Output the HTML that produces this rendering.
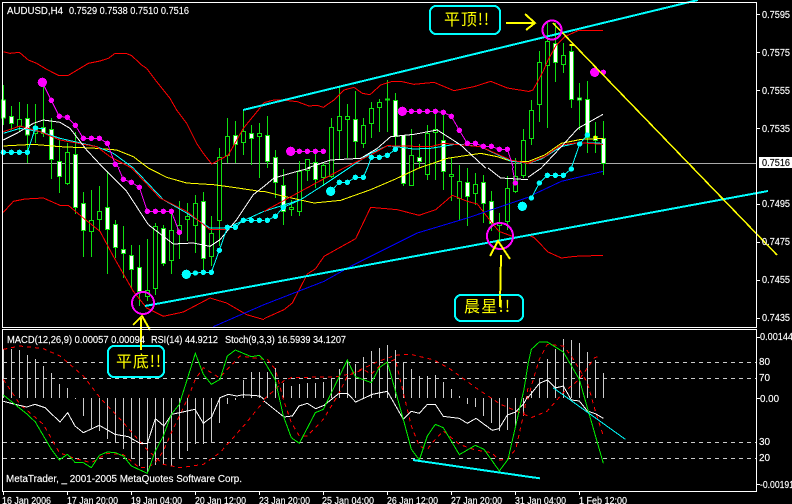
<!DOCTYPE html>
<html><head><meta charset="utf-8"><style>
html,body{margin:0;padding:0;background:#000;width:792px;height:504px;overflow:hidden}
svg{display:block;shape-rendering:crispEdges}
text{font-family:"Liberation Sans","WenQuanYi Zen Hei",sans-serif;font-size:10px;fill:#fff;stroke:#fff;stroke-width:.15;shape-rendering:auto}
.cn{font-family:"WenQuanYi Zen Hei","Noto Sans CJK SC",sans-serif;font-size:16px;fill:#ff0;stroke:none}
.p path{fill:none;stroke-width:3}
.p circle{stroke:none}
.r{stroke:#f00}.y{stroke:#ff0}.c{stroke:#0ff}.w{stroke:#fff}.b{stroke:#00f}.m{stroke:#f0f}.g{stroke:#0e0}
.d{stroke-dasharray:12 12}
.t{stroke-width:6!important}
</style></head><body>
<svg width="792" height="504" viewBox="0 0 792 504" xmlns="http://www.w3.org/2000/svg">
<rect width="792" height="504" fill="#000"/>
<!-- current price line -->
<path d="M3 163.5H756" stroke="#aaa" fill="none"/>
<!-- wicks -->
<path stroke="#10e010" fill="none" d="M3.5 85V125M11.5 106V130M19.5 102V132M27.5 104V163M35.5 104V143M43.5 85V137M51.5 118V179M59.5 140V193M67.5 143V185M75.5 132V214M83.5 192V257M91.5 190V257M99.5 186V231M107.5 171V274M115.5 220V258M123.5 226V278M131.5 245V288M139.5 245V306M147.5 239V301M155.5 223V295M163.5 225V266M171.5 211V274M179.5 201V259M187.5 203V241M195.5 195V253M203.5 192V270M211.5 216V266M219.5 148V246M227.5 118V163M235.5 121V163M243.5 110V155M251.5 125V165M259.5 123V178M267.5 116V168M275.5 150V198M283.5 169V225M291.5 200V216M299.5 161V216M307.5 159V181M315.5 153V188M323.5 163V186M331.5 118V178M339.5 86V160M347.5 104V158M355.5 91V158M363.5 118V148M371.5 102V138M379.5 99V132M387.5 80V132M395.5 93V147M403.5 135V186M411.5 129V186M419.5 144V168M427.5 125V180M435.5 113V180M443.5 113V190M451.5 158V201M459.5 165V220M467.5 168V226M475.5 173V205M483.5 175V223M491.5 191V231M499.5 213V241M507.5 176V230M515.5 158V193M523.5 129V178M531.5 100V145M539.5 51V122M547.5 21V128M555.5 23V82M563.5 43V73M571.5 44V108M579.5 83V130M587.5 81V153M595.5 122V153M603.5 121V175"/>
<!-- bearish bodies (white) -->
<g fill="#fff" stroke="#10e010">
<rect x="1.5" y="100" width="4" height="18"/><rect x="9.5" y="116.5" width="4" height="7"/><rect x="25.5" y="118.5" width="4" height="16.5"/><rect x="41.5" y="127.5" width="4" height="6"/><rect x="49.5" y="129.5" width="4" height="30"/><rect x="57.5" y="161.5" width="4" height="15"/><rect x="73.5" y="154.5" width="4" height="53"/><rect x="81.5" y="203.5" width="4" height="27"/><rect x="105.5" y="207.5" width="4" height="22"/><rect x="113.5" y="224.5" width="4" height="23"/><rect x="121.5" y="249.5" width="4" height="4"/><rect x="129.5" y="255.5" width="4" height="14"/><rect x="137.5" y="267.5" width="4" height="24"/><rect x="161.5" y="228.5" width="4" height="35"/><rect x="201.5" y="201.5" width="4" height="57"/><rect x="233.5" y="135.5" width="4" height="9"/><rect x="249.5" y="133.5" width="4" height="5"/><rect x="265.5" y="135.5" width="4" height="26"/><rect x="273.5" y="157.5" width="4" height="25"/><rect x="281.5" y="185.5" width="4" height="26"/><rect x="313.5" y="162.5" width="4" height="17"/><rect x="353.5" y="119.5" width="4" height="22"/><rect x="393.5" y="100.5" width="4" height="36"/><rect x="401.5" y="135.5" width="4" height="48"/><rect x="417.5" y="157.5" width="4" height="4"/><rect x="441.5" y="140.5" width="4" height="31"/><rect x="465.5" y="182.5" width="4" height="14"/><rect x="481.5" y="182.5" width="4" height="21"/><rect x="489.5" y="201.5" width="4" height="22"/><rect x="553.5" y="43.5" width="4" height="19"/><rect x="569.5" y="51.5" width="4" height="48"/><rect x="577.5" y="98" width="4" height="2"/><rect x="585.5" y="99.5" width="4" height="38"/><rect x="593.5" y="136.5" width="4" height="4"/><rect x="601.5" y="138.5" width="4" height="25"/>
</g>
<!-- bullish bodies (hollow) -->
<g fill="#000" stroke="#10e010">
<rect x="17.5" y="119.5" width="4" height="7"/><rect x="33.5" y="126.5" width="4" height="7"/><rect x="65.5" y="152.5" width="4" height="31"/><rect x="89.5" y="220.5" width="4" height="11"/><rect x="97.5" y="211.5" width="4" height="8"/><rect x="145.5" y="290.5" width="4" height="6"/><rect x="153.5" y="226.5" width="4" height="62"/><rect x="169.5" y="230.5" width="4" height="30"/><rect x="177.5" y="225.5" width="4" height="8"/><rect x="185.5" y="216.5" width="4" height="3"/><rect x="193.5" y="203.5" width="4" height="22"/><rect x="209.5" y="233.5" width="4" height="23"/><rect x="217.5" y="157.5" width="4" height="63"/><rect x="225.5" y="136.5" width="4" height="19"/><rect x="241.5" y="131.5" width="4" height="11"/><rect x="257.5" y="133.5" width="4" height="3"/><rect x="289.5" y="207.5" width="4" height="2"/><rect x="297.5" y="171.5" width="4" height="40"/><rect x="305.5" y="159.5" width="4" height="11"/><rect x="321.5" y="165.5" width="4" height="12"/><rect x="329.5" y="127.5" width="4" height="49"/><rect x="337.5" y="116.5" width="4" height="14"/><rect x="345.5" y="116.5" width="4" height="3"/><rect x="361.5" y="125.5" width="4" height="18"/><rect x="369.5" y="108.5" width="4" height="15"/><rect x="377.5" y="102.5" width="4" height="5"/><rect x="385.5" y="99" width="4" height="1"/><rect x="409.5" y="155.5" width="4" height="30"/><rect x="425.5" y="133.5" width="4" height="41"/><rect x="433.5" y="129.5" width="4" height="3"/><rect x="449.5" y="174.5" width="4" height="2"/><rect x="457.5" y="181.5" width="4" height="17"/><rect x="473.5" y="184.5" width="4" height="9"/><rect x="497.5" y="222.5" width="4" height="3"/><rect x="505.5" y="188.5" width="4" height="33"/><rect x="513.5" y="176.5" width="4" height="15"/><rect x="521.5" y="140.5" width="4" height="35"/><rect x="529.5" y="110.5" width="4" height="28"/><rect x="537.5" y="62.5" width="4" height="42"/><rect x="545.5" y="41.5" width="4" height="24"/><rect x="561.5" y="55.5" width="4" height="9"/>
</g>

<!-- Panel A -->
<g class="p" transform="translate(0 0) scale(.33333)">
<path class="r" d="M10 155L30 160 58 157 85 180 110 190 140 208 175 226 205 226 240 205 265 190 300 183 325 175 345 160 378 160 395 167 425 195 440 205 470 245 510 295 530 330 560 370 590 430 610 460 635 492 685 465 730 385 775 330 792 308"/>
<path class="y" d="M10 438L100 433 180 440 290 445 350 450 400 470 445 504"/>
<path class="c" d="M10 400L60 385 120 395 180 415 290 440 340 460 400 504"/>
<path class="r" d="M10 395L60 378 120 395 180 420 290 440 330 470 395 504"/>
<path class="w" d="M10 420L50 400 100 370 130 360 180 367 210 385 260 450 310 504"/>
<path class="m" d="M127 247L154 301 178 349 202 352 226 376 250 415 298 415 322 430 346 493 358 504"/>
<path class="c" d="M10 457H82L106 384 130 386"/>
<g fill="#f0f"><circle cx="127" cy="247" r="14"/><circle cx="154" cy="301" r="8"/><circle cx="178" cy="349" r="8"/><circle cx="202" cy="352" r="8"/><circle cx="226" cy="376" r="8"/><circle cx="250" cy="415" r="8"/><circle cx="274" cy="415" r="8"/><circle cx="298" cy="415" r="8"/><circle cx="322" cy="430" r="8"/><circle cx="346" cy="493" r="8"/></g>
<g fill="#0ff"><circle cx="10" cy="457" r="8"/><circle cx="34" cy="457" r="8"/><circle cx="58" cy="457" r="8"/><circle cx="82" cy="457" r="8"/><circle cx="106" cy="384" r="8"/></g>
</g>

<!-- Panel B -->
<g class="p" transform="translate(264 0) scale(.33333)">
<path class="r" d="M0 308L30 300 55 300 100 305 135 318 160 316 178 322 210 300 240 270 270 262 295 280 318 284 350 255 385 244 410 244 450 253 510 247 570 272 630 260 680 244 730 264 792 274"/>
<path class="y" d="M465 504L550 475 650 460 700 470 745 485 792 485"/>
<path class="c" d="M255 504L320 460 370 437 450 447 500 445 580 432 650 440 740 483 792 490"/>
<path class="r" d="M240 504L320 465 370 437 500 440 540 430 650 440 740 480 792 490"/>
<path class="w" d="M130 504L200 480 290 475 340 445 380 410 450 403 520 390 590 435 665 504"/>
<path class="m" d="M80 454H178M415 334H514L538 337 562 349 586 391 610 430H634L658 439H682L706 448H730L744 490 748 504"/>
<path class="c" d="M310 504L322 472H346L370 466 394 448"/>
<g fill="#f0f"><circle cx="80" cy="454" r="14"/><circle cx="106" cy="454" r="8"/><circle cx="130" cy="454" r="8"/><circle cx="154" cy="454" r="8"/><circle cx="178" cy="454" r="8"/><circle cx="415" cy="334" r="14"/><circle cx="442" cy="334" r="8"/><circle cx="466" cy="334" r="8"/><circle cx="490" cy="334" r="8"/><circle cx="514" cy="334" r="8"/><circle cx="538" cy="337" r="8"/><circle cx="562" cy="349" r="8"/><circle cx="586" cy="391" r="8"/><circle cx="610" cy="430" r="8"/><circle cx="634" cy="430" r="8"/><circle cx="658" cy="439" r="8"/><circle cx="682" cy="439" r="8"/><circle cx="706" cy="448" r="8"/><circle cx="730" cy="448" r="8"/></g>
<g fill="#0ff"><circle cx="322" cy="472" r="8"/><circle cx="346" cy="472" r="8"/><circle cx="370" cy="466" r="8"/><circle cx="394" cy="448" r="8"/></g>
</g>

<!-- Panel C -->
<g class="p" transform="translate(528 0) scale(.33333)">
<path class="r" d="M0 275L15 270 45 215 60 180 85 135 110 110 150 92 225 91"/>
<path class="y" d="M0 485L50 465 100 430 160 418 226 415"/>
<path class="c" d="M0 490L40 477 100 440 150 428 225 430"/>
<path class="r" d="M0 490L50 470 100 435 150 428 225 433"/>
<path class="w" d="M40 504L100 440 150 385 225 343"/>
<path class="c" d="M130 504L155 432 178 405"/>
<g fill="#f0f"><circle cx="200" cy="217" r="14"/><circle cx="226" cy="217" r="8"/></g>
<g fill="#0ff"><circle cx="155" cy="432" r="8"/><circle cx="178" cy="405" r="8"/></g>
<g fill="#ff0"><circle cx="202" cy="412" r="5"/><rect x="124" y="132" width="14" height="6"/></g>
</g>

<!-- Panel D -->
<g class="p" transform="translate(0 168) scale(.33333)">
<path class="r" d="M10 133L40 100 75 93 130 90 180 112 205 112 250 150 300 190 340 265 400 370 440 420 490 445 550 432 630 390 680 405 740 440 792 455"/>
<path class="y" d="M445 0L500 28 560 45 640 50 700 58 780 70 792 70"/>
<path class="c" d="M400 0L490 95 560 135 630 180 680 180 730 158 792 130"/>
<path class="r" d="M395 0L480 90 560 130 630 185 680 185"/>
<path class="w" d="M310 0L380 70 445 170 520 228 580 225 630 235 660 215 710 155 760 80 792 55"/>
<path class="b" d="M640 476L792 410"/>
<path class="m" d="M355 0L370 34 394 43 418 58 442 130H514L538 193"/>
<path class="c" d="M558 319L586 315 610 313H634L658 247 682 178H706L730 157H792"/>
<g fill="#f0f"><circle cx="370" cy="34" r="8"/><circle cx="394" cy="43" r="8"/><circle cx="418" cy="58" r="8"/><circle cx="442" cy="130" r="8"/><circle cx="466" cy="130" r="8"/><circle cx="490" cy="130" r="8"/><circle cx="514" cy="130" r="8"/><circle cx="538" cy="193" r="8"/></g>
<g fill="#0ff"><circle cx="559" cy="319" r="14"/><circle cx="586" cy="315" r="8"/><circle cx="610" cy="313" r="8"/><circle cx="634" cy="313" r="8"/><circle cx="658" cy="247" r="8"/><circle cx="682" cy="178" r="8"/><circle cx="706" cy="178" r="8"/><circle cx="730" cy="157" r="8"/><circle cx="754" cy="157" r="8"/><circle cx="778" cy="157" r="8"/></g>
</g>

<!-- Panel E -->
<g class="p" transform="translate(264 168) scale(.33333)">
<path class="r" d="M0 452L60 425 85 405 130 318 155 302 180 265 275 212 320 118 400 125 465 142 515 125 565 82 610 100 640 108 680 160 705 190 745 205"/>
<path class="y" d="M0 70L60 85 150 105 230 97 320 65 390 35 465 0"/>
<path class="c" d="M0 130L110 95 180 50 255 0"/>
<path class="r" d="M0 130L110 70 240 0"/>
<path class="w" d="M0 55L30 30 100 10 140 0M672 0L710 30 792 35"/>
<path class="b" d="M0 410L180 340 260 295 460 195 610 150 792 88"/>
<path class="c" d="M10 157L34 145 58 118 110 95M200 70L226 43H250L274 28H298L310 0"/>
<g fill="#f0f"><circle cx="754" cy="45" r="8"/></g>
<path class="m" d="M745 0L754 45"/>
<g fill="#0ff"><circle cx="10" cy="157" r="8"/><circle cx="34" cy="145" r="8"/><circle cx="58" cy="118" r="8"/><circle cx="200" cy="70" r="14"/><circle cx="226" cy="43" r="8"/><circle cx="250" cy="43" r="8"/><circle cx="274" cy="28" r="8"/><circle cx="298" cy="28" r="8"/><circle cx="775" cy="115" r="14"/></g>
</g>

<!-- Panel F -->
<g class="p" transform="translate(528 168) scale(.33333)">
<path class="r" d="M0 200L20 210 60 252 100 270 140 265 225 262"/>
<path class="b" d="M15 80L100 40 225 10"/>
<path class="w" d="M0 28L40 0"/>
<path class="c" d="M10 90L34 45 58 22H106L130 3"/>
<g fill="#0ff"><circle cx="10" cy="90" r="8"/><circle cx="34" cy="45" r="8"/><circle cx="58" cy="22" r="8"/><circle cx="82" cy="22" r="8"/><circle cx="106" cy="22" r="8"/><circle cx="130" cy="3" r="8"/></g>
</g>

<!-- Trend lines -->
<g fill="none">
<path d="M243 110L698 0" stroke="#0ff" stroke-width="2"/>
<path d="M145 306L768 191" stroke="#0ff" stroke-width="2"/>
<path d="M553 23L777 255" stroke="#ff0" stroke-width="1.5"/>
<circle cx="552" cy="30" r="9.5" stroke="#f0f" stroke-width="2"/>
<circle cx="143" cy="303" r="11" stroke="#f0f" stroke-width="2"/>
<circle cx="500" cy="236" r="13" stroke="#f0f" stroke-width="2"/>
<path d="M506 23H535M525 14L535 23 526 30" stroke="#ff0" stroke-width="2"/>
<path d="M490 256L498 241 510 259M501 255L500 303" stroke="#ff0" stroke-width="2"/>
<path d="M133 325L142 316 150 330M141 318V351" stroke="#ff0" stroke-width="2"/>
</g>

<!-- Lower window -->
<path stroke="#ccc" fill="none" d="M3.5 349V398M11.5 349V398M19.5 350V398M27.5 355V398M35.5 359V398M43.5 366V398M51.5 373V398M59.5 384V398M67.5 388V398M75.5 398V399M83.5 398V416M91.5 398V428M99.5 398V431M107.5 398V439M115.5 398V443M123.5 398V449M131.5 398V458M139.5 398V466M147.5 398V473M155.5 398V465M163.5 398V465M171.5 398V466M179.5 398V459M187.5 398V451M195.5 398V444M203.5 398V444M211.5 398V443M219.5 398V423M227.5 398V404M235.5 398V400M243.5 380V398M251.5 372V398M259.5 372V398M267.5 372V398M275.5 368V398M283.5 383V398M291.5 386V398M299.5 384V398M307.5 383V398M315.5 383V398M323.5 382V398M331.5 378V398M339.5 369V398M347.5 360V398M355.5 364V398M363.5 357V398M371.5 351V398M379.5 348V398M387.5 345V398M395.5 350V398M403.5 363V398M411.5 369V398M419.5 376V398M427.5 376V398M435.5 375V398M443.5 382V398M451.5 389V398M459.5 396V398M467.5 398V404M475.5 398V407M483.5 398V416M491.5 398V423M499.5 398V431M507.5 398V430M515.5 398V428M523.5 398V416M531.5 391V398M539.5 379V398M547.5 359V398M555.5 349V398M563.5 339V398M571.5 340V398M579.5 343V398M587.5 352V398M595.5 360V398M603.5 373V398"/>
<path d="M3 362.5H756M3 378.5H756M3 442.5H756M3 458.5H756" stroke="#ccc" fill="none" stroke-dasharray="4 4"/>

<g class="p" transform="translate(0 336) scale(.33333)">
<path class="r d" d="M10 40L60 30 130 38 180 60 250 120 300 185 370 260 440 340 490 385 540 395 610 385 660 350 735 265 792 195"/>
<path class="r d" d="M10 130L60 205 130 265 178 350 226 368 274 380 322 352 370 356 418 395 442 395 466 380 490 345 514 290 562 190 586 130 610 95 658 125 682 100 720 60 792 70"/>
<path class="w" d="M10 196L45 205 80 213 105 205 135 215 180 258 203 230 225 270 250 290 298 268 345 295 385 302 420 322 442 322 466 248 492 270 515 235 585 220 610 262 635 243 660 185 685 175 710 180 730 176 780 180 792 190"/>
<path class="g" d="M10 177L82 235 106 258 154 340 178 372 202 355 226 380 250 380 274 395 298 358 322 348 346 350 370 360 394 390 442 412 466 345 490 300 514 235 538 205 586 52 610 115 634 145 660 130 682 60 706 42 754 62 778 58 792 72"/>
</g>
<g class="p" transform="translate(264 336) scale(.33333)">
<path class="r d" d="M0 190L34 160 58 135 82 125 226 122 274 108 346 75 394 58 440 55 510 72 560 100 635 155 710 205 792 240"/>
<path class="r d" d="M10 70L34 100 58 190 82 260 106 300 130 300 178 250 226 170 250 120 298 100 322 115 346 90 394 70 418 170 442 270 466 330 490 340 514 310 538 285 586 325 634 342 682 350 706 372 730 370 755 340 780 230 792 155"/>
<path class="w" d="M0 195L60 243 85 240 105 210 130 202 155 218 180 208 225 172 250 172 275 198 325 175 370 166 418 250 442 226 466 232 490 205 514 205 538 241 586 247 610 262 636 247 685 283 705 278 730 237 755 228 778 205 792 180"/>
<path class="g" d="M0 75L34 132 58 240 82 305 106 322 154 230 178 220 250 72 274 122 322 140 346 95 370 78 418 250 442 340 466 372 490 300 514 265 538 275 586 356 634 328 660 340 706 405 732 370 755 270 780 160 792 85"/>
<path class="c t" d="M447 372L792 422"/>
</g>
<g class="p" transform="translate(528 336) scale(.33333)">
<path class="r d" d="M10 245L58 225 106 170 154 130 200 65 215 60"/>
<path class="r d" d="M0 190L10 150 34 70 58 25 106 30 130 60 154 100 178 140 202 225 226 300"/>
<path class="w" d="M0 185L34 142 58 132 82 156 106 150 130 192 154 195 178 225 202 233 226 247"/>
<path class="g" d="M0 85L10 40 34 18H58L106 48 154 130 178 215 226 382"/>
<path class="c t" d="M0 422L36 427"/>
<path class="c" d="M75 155L292 310"/>
</g>

<!-- Frames and ticks -->
<g fill="none" stroke="#fff">
<path d="M2.5 2.5H756.5V327.5H2.5Z"/>
<path d="M2.5 329.5H756.5V491.5H2.5Z"/>
<path d="M757 14.5h3M757 52.5h3M757 90.5h3M757 128.5h3M757 204.5h3M757 242.5h3M757 280.5h3M757 318.5h3M757 337.5h3M757 398.5h3M757 484.5h3"/>
<path d="M3.5 492v3M67.5 492v3M131.5 492v3M195.5 492v3M259.5 492v3M323.5 492v3M387.5 492v3M451.5 492v3M515.5 492v3M579.5 492v3"/>
</g>

<!-- Callouts -->
<g fill="#000" stroke="#0ff" stroke-width="2">
<rect x="430" y="6" width="70" height="28" rx="6"/>
<rect x="108" y="346" width="56" height="31" rx="6"/>
<rect x="455" y="295" width="68" height="26" rx="6"/>
</g>
<path d="M141 336V350" stroke="#ff0" stroke-width="2"/>
<path d="M500 295V307" stroke="#ff0" stroke-width="2"/>
<text class="cn" x="444" y="25" textLength="45" lengthAdjust="spacing">平顶!!</text>
<text class="cn" x="116" y="367" textLength="45" lengthAdjust="spacing">平底!!</text>
<text class="cn" x="464" y="312" textLength="46" lengthAdjust="spacing">晨星!!</text>

<!-- Text labels -->
<text x="7" y="14" textLength="56" lengthAdjust="spacingAndGlyphs">AUDUSD,H4</text>
<text x="69" y="14" textLength="120" lengthAdjust="spacingAndGlyphs">0.7529 0.7538 0.7510 0.7516</text>
<text x="7" y="343" textLength="138" lengthAdjust="spacingAndGlyphs">MACD(12,26,9) 0.00057 0.00094</text>
<text x="151" y="343" textLength="67" lengthAdjust="spacingAndGlyphs">RSI(14) 44.9212</text>
<text x="225" y="343" textLength="121" lengthAdjust="spacingAndGlyphs">Stoch(9,3,3) 16.5939 34.1207</text>
<text x="6" y="482" textLength="236" lengthAdjust="spacingAndGlyphs">MetaTrader, _ 2001-2005 MetaQuotes Software Corp.</text>

<g>
<text x="762" y="18" textLength="28" lengthAdjust="spacingAndGlyphs">0.7595</text>
<text x="762" y="56" textLength="28" lengthAdjust="spacingAndGlyphs">0.7575</text>
<text x="762" y="94" textLength="28" lengthAdjust="spacingAndGlyphs">0.7555</text>
<text x="762" y="132" textLength="28" lengthAdjust="spacingAndGlyphs">0.7535</text>
<rect x="759" y="157" width="33" height="11" fill="#fff"/>
<text x="762" y="166" textLength="28" lengthAdjust="spacingAndGlyphs" style="fill:#000;stroke:#000">0.7516</text>
<text x="762" y="207" textLength="28" lengthAdjust="spacingAndGlyphs">0.7495</text>
<text x="762" y="245" textLength="28" lengthAdjust="spacingAndGlyphs">0.7475</text>
<text x="762" y="283" textLength="28" lengthAdjust="spacingAndGlyphs">0.7455</text>
<text x="762" y="321" textLength="28" lengthAdjust="spacingAndGlyphs">0.7435</text>
<text x="760" y="340" textLength="33" lengthAdjust="spacingAndGlyphs">0.00144</text>
<text x="759" y="365" textLength="11" lengthAdjust="spacingAndGlyphs">80</text>
<text x="759" y="381" textLength="11" lengthAdjust="spacingAndGlyphs">70</text>
<text x="760" y="402" textLength="19" lengthAdjust="spacingAndGlyphs">0.00</text>
<text x="759" y="445" textLength="11" lengthAdjust="spacingAndGlyphs">30</text>
<text x="759" y="461" textLength="11" lengthAdjust="spacingAndGlyphs">20</text>
<text x="760" y="488" textLength="34" lengthAdjust="spacingAndGlyphs">-0.00191</text>
</g>
<g>
<text x="2" y="504" textLength="49" lengthAdjust="spacingAndGlyphs">16 Jan 2006</text>
<text x="67" y="504" textLength="51" lengthAdjust="spacingAndGlyphs">17 Jan 20:00</text>
<text x="131" y="504" textLength="51" lengthAdjust="spacingAndGlyphs">19 Jan 04:00</text>
<text x="195" y="504" textLength="51" lengthAdjust="spacingAndGlyphs">20 Jan 12:00</text>
<text x="259" y="504" textLength="51" lengthAdjust="spacingAndGlyphs">23 Jan 20:00</text>
<text x="322" y="504" textLength="52" lengthAdjust="spacingAndGlyphs">25 Jan 04:00</text>
<text x="387" y="504" textLength="51" lengthAdjust="spacingAndGlyphs">26 Jan 12:00</text>
<text x="451" y="504" textLength="51" lengthAdjust="spacingAndGlyphs">27 Jan 20:00</text>
<text x="515" y="504" textLength="51" lengthAdjust="spacingAndGlyphs">31 Jan 04:00</text>
<text x="579" y="504" textLength="48" lengthAdjust="spacingAndGlyphs">1 Feb 12:00</text>
</g>
</svg>
</body></html>
